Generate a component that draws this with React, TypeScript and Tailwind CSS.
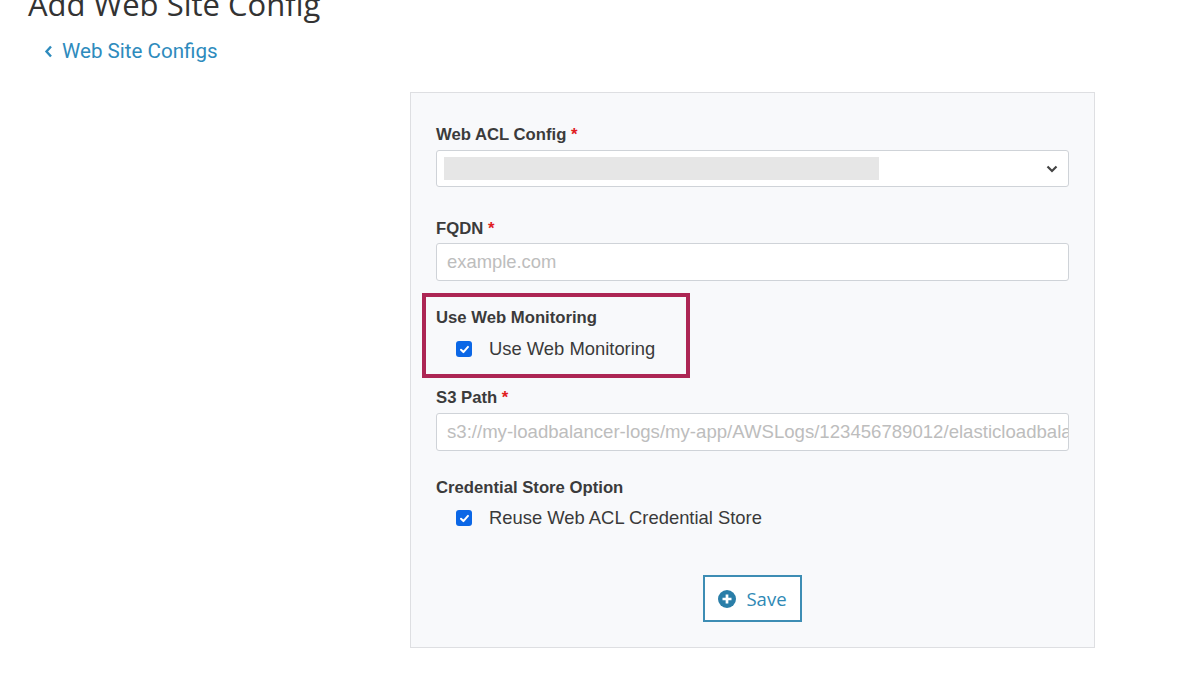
import React from "react";

function Check({ label }: { label: string }) {
  return (
    <div className="flex items-center h-[24px] pl-[20px]">
      <span className="w-[16px] h-[16px] rounded-[3px] bg-[#0b67e6] flex items-center justify-center">
        <svg width="11" height="11" viewBox="0 0 12 12">
          <path d="M2.2 6.3 L4.8 8.8 L9.8 3.2" fill="none" stroke="#fff" strokeWidth="2.2" strokeLinecap="round" strokeLinejoin="round" />
        </svg>
      </span>
      <span className="ml-[17px] text-[18.4px] text-[#3a3a3a]">{label}</span>
    </div>
  );
}

function Label({ text, req }: { text: string; req?: boolean }) {
  return (
    <div className="h-[21px] text-[16.7px] leading-[21px] font-bold text-[#3b3b3b]">
      {text}
      {req && <span className="text-[#e0201f]"> *</span>}
    </div>
  );
}

export default function App() {
  return (
    <div className="w-[1200px] h-[675px] bg-white overflow-hidden" style={{ fontFamily: '"Liberation Sans", Arial, sans-serif' }}>
      <div
        className="ml-[28px] mt-[-14px] text-[31px] leading-[36px] text-[#333]"
        style={{ fontFamily: '"Open Sans", sans-serif' }}
      >
        Add Web Site Config
      </div>
      <div
        className="ml-[44px] mt-[17px] flex items-center text-[20.6px] leading-[24px] text-[#2e8bbd]"
        style={{ fontFamily: 'Roboto, sans-serif' }}
      >
        <svg width="9" height="13" viewBox="0 0 9 13" className="mr-[9px]">
          <path d="M7 1.5 L2.5 6.5 L7 11.5" fill="none" stroke="#2e8bbd" strokeWidth="2.4" />
        </svg>
        Web Site Configs
      </div>
      <div className="ml-[410px] mt-[29px] w-[685px] h-[556px] border border-[#dedfe2] bg-[#f8f9fb] px-[25px] pt-[31px]">
        <Label text="Web ACL Config" req />
        <div className="mt-[5px] h-[37px] bg-white border border-[#cfd3d8] rounded-[3px] flex items-center pl-[7px] pr-[10px]">
          <div className="w-[435px] h-[23px] bg-[#e6e6e6]" />
          <div className="flex-1" />
          <svg width="12" height="8" viewBox="0 0 12 8">
            <path d="M1.5 1.5 L6 6 L10.5 1.5" fill="none" stroke="#444" strokeWidth="2.2" />
          </svg>
        </div>
        <div className="mt-[31px]">
          <Label text="FQDN" req />
        </div>
        <div className="mt-[4px] h-[38px] bg-white border border-[#cfd3d8] rounded-[3px] flex items-center pl-[10px] text-[18.4px] text-[#bdbdbd]">
          example.com
        </div>
        <div className="relative mt-[26px]">
          <div className="absolute left-[-14px] top-[-14px] w-[268px] h-[85px] border-[4px] border-[#ad2654] pointer-events-none" />
          <Label text="Use Web Monitoring" />
          <div className="mt-[9px]">
            <Check label="Use Web Monitoring" />
          </div>
        </div>
        <div className="mt-[26px]">
          <Label text="S3 Path" req />
        </div>
        <div className="mt-[5px] h-[38px] bg-white border border-[#cfd3d8] rounded-[3px] flex items-center pl-[10px] text-[18.6px] text-[#bdbdbd] overflow-hidden whitespace-nowrap">
          s3://my-loadbalancer-logs/my-app/AWSLogs/123456789012/elasticloadbalancing
        </div>
        <div className="mt-[26px]">
          <Label text="Credential Store Option" />
        </div>
        <div className="mt-[8px]">
          <Check label="Reuse Web ACL Credential Store" />
        </div>
        <div className="mt-[45px] flex justify-center">
          <div
            className="w-[99px] h-[47px] border-2 border-[#3d8db4] bg-white flex items-center justify-center text-[18.5px] text-[#2f89b5]"
            style={{ fontFamily: '"Open Sans", sans-serif' }}
          >
            <svg width="18" height="18" viewBox="0 0 16 16" className="mr-[10px]">
              <circle cx="8" cy="8" r="8" fill="#2a7ea8" />
              <path d="M8 4 V12 M4 8 H12" stroke="#fff" strokeWidth="2.4" />
            </svg>
            Save
          </div>
        </div>
      </div>
    </div>
  );
}
